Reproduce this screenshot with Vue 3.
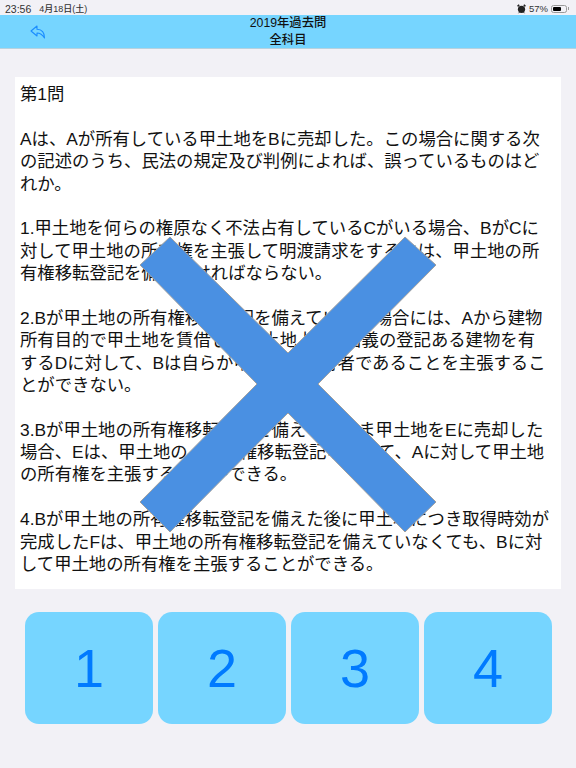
<script setup>
const title = '2019年過去問'
const subject = '全科目'
const paragraphs = [
  '第1問',
  'Aは、Aが所有している甲土地をBに売却した。この場合に関する次の記述のうち、民法の規定及び判例によれば、誤っているものはどれか。',
  '1.甲土地を何らの権原なく不法占有しているCがいる場合、BがCに対して甲土地の所有権を主張して明渡請求をするには、甲土地の所有権移転登記を備えなければならない。',
  '2.Bが甲土地の所有権移転登記を備えていない場合には、Aから建物所有目的で甲土地を賃借して甲土地上にD名義の登記ある建物を有するDに対して、Bは自らが甲土地の所有者であることを主張することができない。',
  '3.Bが甲土地の所有権移転登記を備えないまま甲土地をEに売却した場合、Eは、甲土地の　所有権移転登記なくして、Aに対して甲土地の所有権を主張することができる。',
  '4.Bが甲土地の所有権移転登記を備えた後に甲土地につき取得時効が完成したFは、甲土地の所有権移転登記を備えていなくても、Bに対して甲土地の所有権を主張することができる。'
]
const answers = [1, 2, 3, 4]
</script>

<template>
  <div class="screen">
    <div class="status">
      <div class="status-left"><span class="time">23:56</span><span>4月18日(土)</span></div>
      <div class="status-right">
        <svg class="alarm" width="9" height="10" viewBox="0 0 9 10">
          <circle cx="4.5" cy="5.3" r="3.6" fill="#222" />
          <path d="M0.6 2.4 L2.2 0.8 M8.4 2.4 L6.8 0.8" stroke="#222" stroke-width="1.5" />
          <path d="M1.6 9.2 L2.4 8.2 M7.4 9.2 L6.6 8.2" stroke="#222" stroke-width="1" />
        </svg>
        <span class="pct">57%</span>
        <span class="battery"><span class="battery-fill"></span></span>
        <span class="battery-cap"></span>
      </div>
    </div>
    <header class="nav">
      <svg class="back" width="16" height="14" viewBox="0 0 16 14" fill="none">
        <path d="M7 1 L1 6 L7 11 L7 8 C10 8 12 9 14.5 13 C14.5 8 12 4.5 7 4.3 Z" stroke="#1a8cff" stroke-width="1.1" stroke-linejoin="round" />
      </svg>
      <div class="nav-title">{{ title }}<br />{{ subject }}</div>
    </header>
    <main class="card">
      <p v-for="p in paragraphs" :key="p">{{ p }}</p>
    </main>
    <div class="answers">
      <button v-for="n in answers" :key="n" class="answer">{{ n }}</button>
    </div>
    <svg class="cross" width="576" height="768" viewBox="0 0 576 768">
      <polygon
        points="170,237 288,353 405,237 436,265 318,384 436,502 405,532 288,413 170,532 140,502 257,384 140,265"
        fill="#4a90e2"
        stroke="#a0a0a0"
        stroke-width="1"
      />
    </svg>
  </div>
</template>

<style scoped>
.screen {
  position: relative;
  width: 576px;
  height: 768px;
  overflow: hidden;
  background: #f2f1f6;
  font-family: "Liberation Sans", "Noto Sans CJK JP", sans-serif;
  color: #111;
}
.status {
  height: 15px;
  box-sizing: border-box;
  padding: 2px 7px 0 5px;
  display: flex;
  justify-content: space-between;
  align-items: center;
  font-size: 9px;
  font-weight: 500;
  color: #333;
}
.status-left {
  display: flex;
  align-items: center;
  gap: 8px;
}
.time {
  font-size: 10.5px;
}
.status-right {
  display: flex;
  align-items: center;
  gap: 3px;
}
.pct {
  font-size: 9.5px;
}
.battery {
  width: 16px;
  height: 8px;
  box-sizing: border-box;
  border: 1px solid #999;
  border-radius: 2.5px;
  padding: 1px;
  display: flex;
}
.battery-fill {
  width: 8px;
  background: #000;
  border-radius: 1px;
}
.battery-cap {
  width: 1px;
  height: 3px;
  margin-left: -2px;
  background: #999;
}
.nav {
  height: 33px;
  background: #76d5ff;
  border-bottom: 1px solid #b7d2df;
  display: flex;
  align-items: center;
  justify-content: center;
  position: relative;
}
.back {
  position: absolute;
  left: 30px;
  top: 10px;
}
.nav-title {
  font-size: 12.3px;
  font-weight: 500;
  line-height: 17px;
  text-align: center;
  color: #111;
}
.card {
  margin: 28px 15px 0;
  height: 512px;
  box-sizing: border-box;
  background: #fff;
  padding: 6px 10px 6px 5px;
  font-size: 17.35px;
  line-height: 22.38px;
}
.card p {
  margin: 0 0 22.38px;
}
.answers {
  margin: 23px 24px 0 25px;
  display: grid;
  grid-template-columns: repeat(4, 1fr);
  gap: 5px;
}
.answer {
  height: 112px;
  border: 0;
  border-radius: 14px;
  background: #76d5ff;
  color: #007aff;
  font-family: inherit;
  font-size: 54px;
  padding: 0;
}
.cross {
  position: absolute;
  left: 0;
  top: 0;
}
</style>
